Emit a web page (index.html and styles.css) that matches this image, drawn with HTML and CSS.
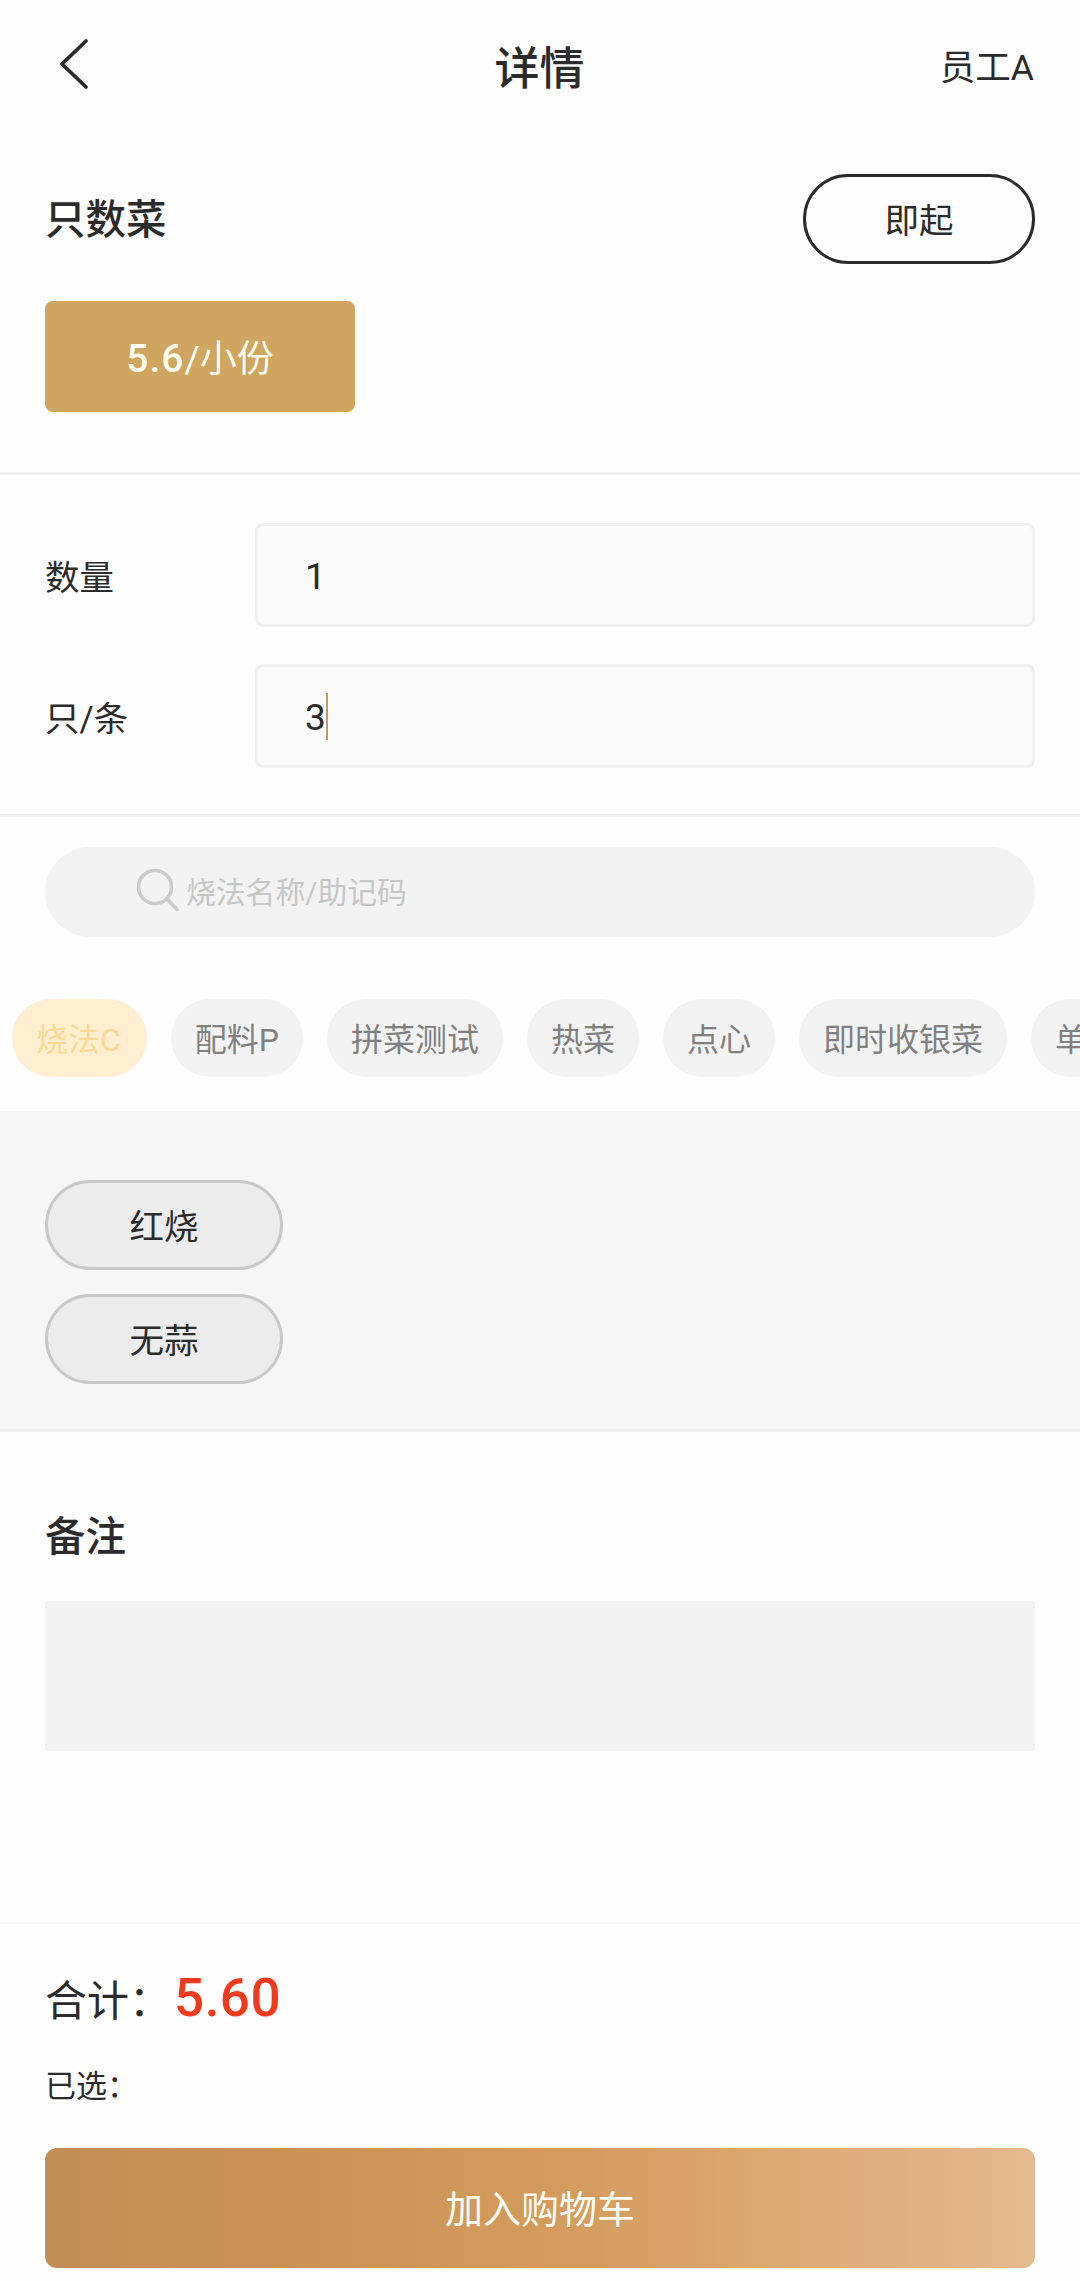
FILE: index.html
```html
<!DOCTYPE html>
<html lang="zh-CN">
<head>
    <meta charset="UTF-8">
    <meta name="viewport" content="width=device-width, initial-scale=1.0">
    <title>详情</title>
    <link rel="stylesheet" href="styles.css">
</head>
<body>
    <header class="navbar">
        <svg class="back" viewBox="0 0 60 60" fill="none" stroke="#2b2b2b" stroke-width="3.8" stroke-linecap="round" stroke-linejoin="round">
            <path d="M41 7L17 30L41 53"/>
        </svg>
        <h1>详情</h1>
        <span class="staff">员工A</span>
    </header>

    <section class="dish">
        <div class="dish-head">
            <h2>只数菜</h2>
            <button class="pill serve">即起</button>
        </div>
        <button class="spec"><b>5.6</b>/小份</button>
    </section>

    <section class="amount">
        <div class="row">
            <label>数量</label>
            <div class="field">1</div>
        </div>
        <div class="row">
            <label>只/条</label>
            <div class="field">3<i class="caret"></i></div>
        </div>
    </section>

    <section class="cooking">
        <div class="search">
            <svg class="search-icon" viewBox="0 0 44 44" fill="none" stroke="#cbcbcb" stroke-width="3.6" stroke-linecap="round">
                <circle cx="19" cy="19" r="16.500"/>
                <path d="M31 31L41 41.500"/>
            </svg>
            <span>烧法名称/助记码</span>
        </div>
        <nav class="tabs">
            <a class="tab active">烧法C</a>
            <a class="tab">配料P</a>
            <a class="tab">拼菜测试</a>
            <a class="tab">热菜</a>
            <a class="tab">点心</a>
            <a class="tab">即时收银菜</a>
            <a class="tab">单点</a>
        </nav>
    </section>

    <section class="options">
        <button class="pill option">红烧</button>
        <button class="pill option">无蒜</button>
    </section>

    <section class="remark">
        <h2>备注</h2>
        <div class="remark-box"></div>
    </section>

    <footer class="footer">
        <div class="total">合计：<span class="price">5.60</span></div>
        <div class="chosen">已选：</div>
        <button class="add">加入购物车</button>
    </footer>
</body>
</html>
```
FILE: styles.css
```css
* {
    box-sizing: border-box;
}
body {
    margin: 0;
    height: 2281px;
    display: flex;
    flex-direction: column;
    overflow: hidden;
    background: #fefefe;
    color: #2b2b2b;
    font-family: Roboto, "Noto Sans CJK SC", sans-serif;
    font-size: 34.5px;
}
h1, h2 {
    margin: 0;
    font-weight: 500;
    line-height: 60px;
}
button {
    padding: 0 0 2px;
    border: none;
    color: inherit;
    font: inherit;
}

/* top bar */
.navbar {
    height: 134px;
    padding: 0 46px 0 45px;
    display: grid;
    grid-template-columns: 1fr auto 1fr;
    align-items: center;
}
.navbar h1 {
    padding-top: 5px;
    font-size: 45px;
}
.back {
    width: 60px;
    height: 60px;
    margin-top: -6px;
}
.staff {
    justify-self: end;
    padding-bottom: 6px;
    font-size: 35.5px;
}

/* dish name and spec */
.dish {
    height: 341px;
    padding: 40px 45px 0;
    border-bottom: 3px solid #f0f0f0;
}
.dish-head {
    height: 90px;
    display: flex;
    align-items: center;
    justify-content: space-between;
}
h2 {
    padding-top: 1px;
    font-size: 40.5px;
}
.pill {
    height: 90px;
    border-radius: 45px;
}
.serve {
    width: 232px;
    border: 3px solid #2b2b2b;
    background: #fefefe;
}
.spec {
    width: 310px;
    height: 111px;
    margin-top: 37px;
    border-radius: 8px;
    background: #cfa55f;
    color: #fffdf0;
    font-size: 37px;
}
.spec b {
    font-size: 39px;
    font-weight: 500;
    letter-spacing: 1px;
}

/* quantity fields */
.amount {
    height: 342px;
    padding: 48px 45px 0;
    display: flex;
    flex-direction: column;
    gap: 37px;
    border-bottom: 3px solid #f0f0f0;
}
.row {
    display: flex;
    align-items: center;
}
.row label {
    width: 210px;
}
.field {
    flex: 1;
    height: 104px;
    padding: 3px 0 0 47px;
    display: flex;
    align-items: center;
    border: 3px solid #f0f0f0;
    border-radius: 8px;
    background: #fafafa;
    font-size: 37px;
}
.caret {
    width: 2px;
    height: 47px;
    margin-top: -2px;
    background: #c39a63;
}

/* search and categories */
.cooking {
    height: 294px;
    padding-top: 30px;
}
.search {
    height: 90px;
    margin: 0 45px;
    padding: 0 0 4px 91px;
    display: flex;
    align-items: center;
    gap: 6px;
    border-radius: 45px;
    background: #f3f3f3;
    color: #c6c6c6;
    font-size: 29.8px;
}
.search-icon {
    width: 44px;
    height: 44px;
}
.tabs {
    margin-top: 62px;
    padding-left: 12px;
    display: flex;
    gap: 24px;
    overflow: hidden;
}
.tab {
    flex: none;
    height: 78px;
    padding: 0 24px;
    line-height: 83px;
    border-radius: 39px;
    background: #f3f3f3;
    color: #808080;
    font-size: 32px;
}
.tab.active {
    padding-right: 26px;
    background: #ffeed0;
    color: #fbd893;
}

/* cooking options */
.options {
    height: 321px;
    padding: 69px 45px 0;
    display: flex;
    flex-direction: column;
    gap: 24px;
    background: #f6f6f6;
    border-bottom: 3px solid #eeeeee;
}
.option {
    width: 238px;
    border: 3px solid #c8c8c8;
    background: #ececec;
}

/* remark */
.remark {
    height: 490px;
    padding: 74px 45px 0;
}
.remark-box {
    height: 150px;
    margin-top: 34px;
    border-radius: 4px;
    background: #f3f3f3;
}

/* bottom bar */
.footer {
    flex: 1;
    padding: 0 45px;
    border-top: 2px solid #f8f8f8;
}
.total {
    height: 60px;
    margin-top: 43px;
    display: flex;
    align-items: center;
    font-size: 42px;
}
.price {
    margin-left: 3px;
    padding-top: 1px;
    color: #f2391b;
    font-size: 53px;
    font-weight: 500;
    letter-spacing: 0.5px;
}
.chosen {
    height: 40px;
    margin-top: 40px;
    line-height: 40px;
    font-size: 31px;
}
.add {
    width: 100%;
    height: 120px;
    margin-top: 41px;
    padding-bottom: 4px;
    border-radius: 12px;
    background: linear-gradient(90deg, #c18e53, #d39a5b 50%, #e5b98e);
    color: #fffdf5;
    font-size: 38px;
}
```
